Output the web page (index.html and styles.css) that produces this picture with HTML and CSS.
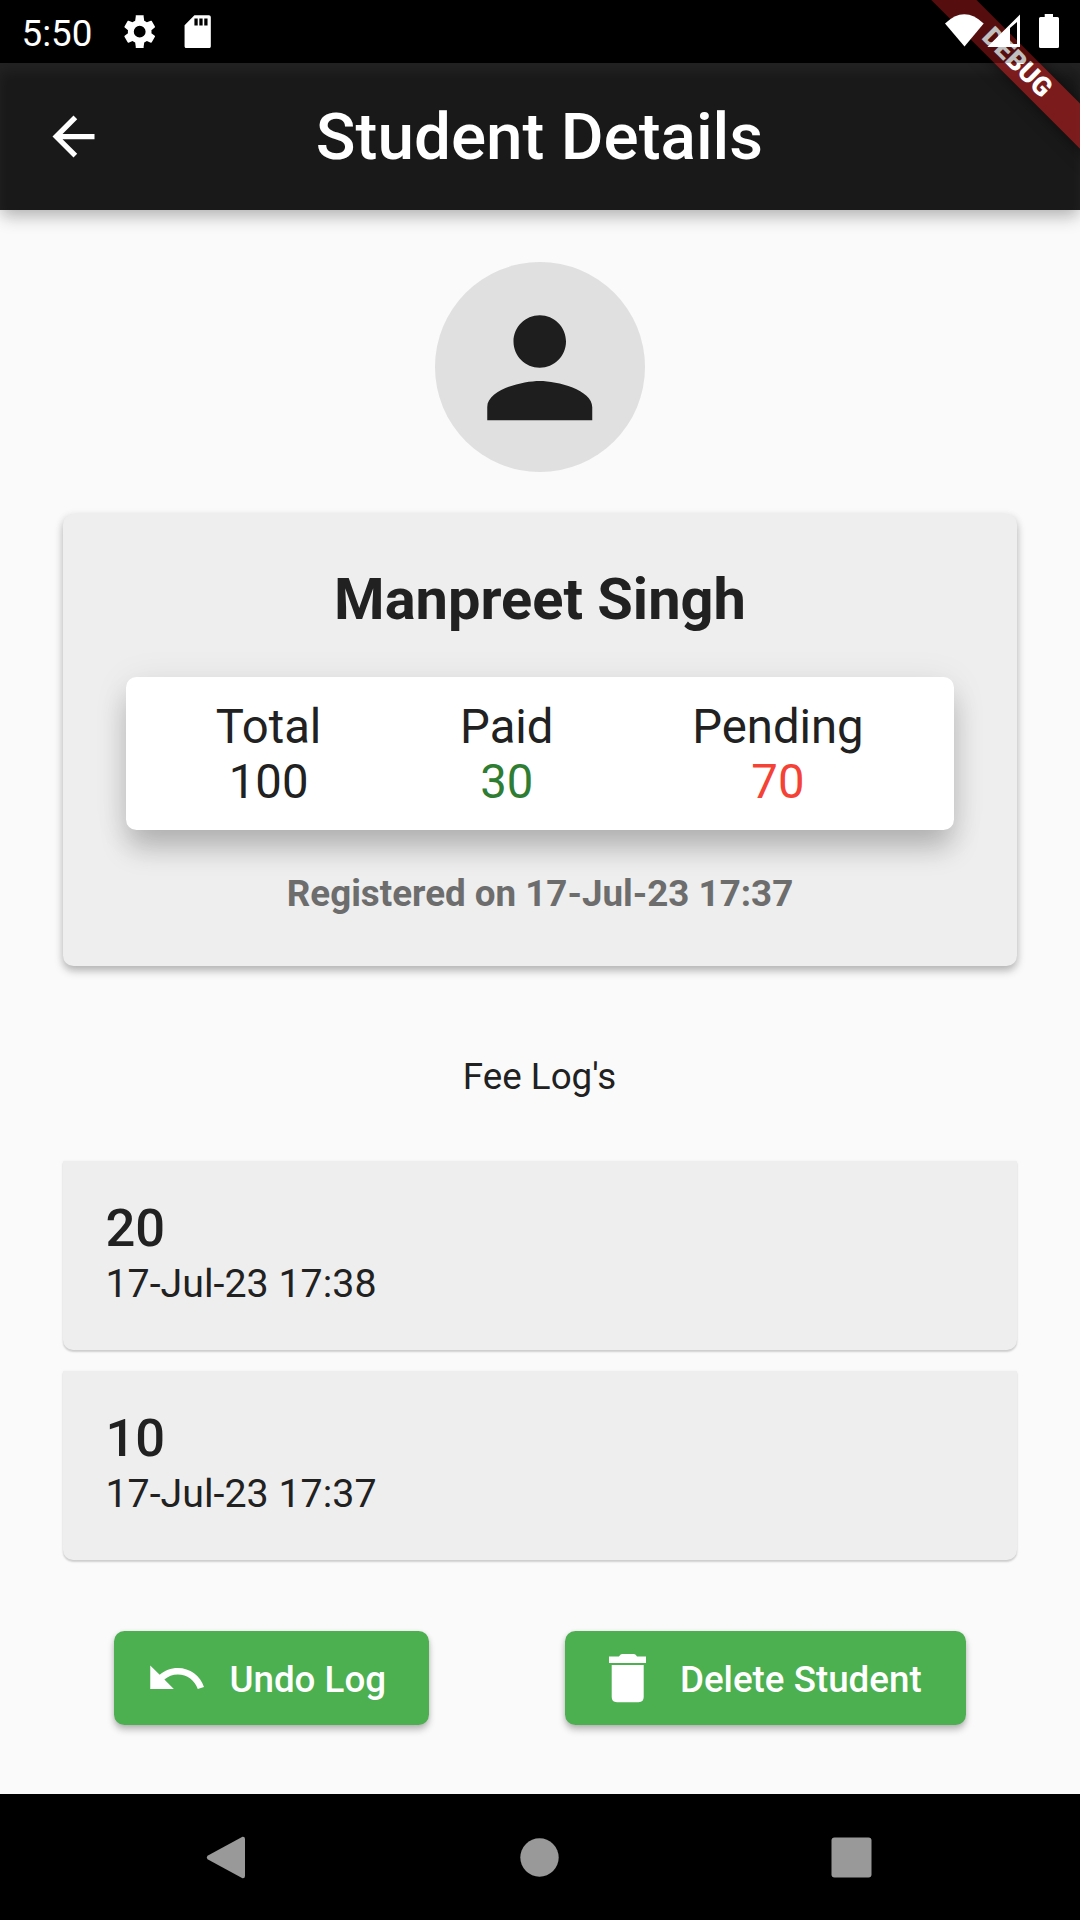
FILE: index.html
```html
<!DOCTYPE html>
<html lang="en">
<head>
<meta charset="utf-8">
<title>Student Details</title>
<link rel="stylesheet" href="styles.css">
</head>
<body>
<div class="screen">
  <header class="top">
    <div class="status">
      <span class="time">5:50</span>
      <svg class="settings" viewBox="0 0 24 24"><path d="M19.14 12.94c.04-.3.06-.61.06-.94 0-.32-.02-.64-.07-.94l2.03-1.58c.18-.14.23-.41.12-.61l-1.92-3.32c-.12-.22-.37-.29-.59-.22l-2.39.96c-.5-.38-1.03-.7-1.62-.94L14.4 2.81V2H9.6v.81l-.36 2.54c-.59.24-1.13.57-1.62.94l-2.39-.96c-.22-.08-.47 0-.59.22L2.74 8.87c-.12.21-.08.47.12.61l2.03 1.58c-.05.3-.09.63-.09.94s.02.64.07.94l-2.03 1.58c-.18.14-.23.41-.12.61l1.92 3.32c.12.22.37.29.59.22l2.39-.96c.5.38 1.03.7 1.62.94L9.6 21.2v.8h4.8v-.8l.36-2.55c.59-.24 1.13-.56 1.62-.94l2.39.96c.22.08.47 0 .59-.22l1.92-3.32c.12-.22.07-.47-.12-.61l-2.02-1.58zM12 15.6a3.6 3.6 0 1 1 0-7.2 3.6 3.6 0 0 1 0 7.2z"/></svg>
      <svg class="sdcard" viewBox="0 0 24 24"><path d="M18.8 2H10L4 8v12.8c0 .7.5 1.2 1.2 1.2h13.600c.7 0 1.200-.5 1.200-1.200V3.200c0-.7-.5-1.200-1.200-1.200zM12 8.300h-2V4h2zm3 0h-2V4h2zm3 0h-2V4h2z"/></svg>
    </div>
    <div class="appbar">
      <svg class="back" viewBox="0 0 24 24"><path d="M20 11H7.830l5.590-5.590L12 4l-8 8 8 8 1.410-1.410L7.830 13H20v-2z"/></svg>
      <h1>Student Details</h1>
    </div>
    <div class="corner">
      <div class="banner">DEBUG</div>
      <div class="scrim"></div>
      <svg class="indicators" viewBox="0 0 135 63">
        <path d="M0 23.500Q19.300 5 38.700 23.500L19.500 46.500z"/>
        <path fill-rule="evenodd" d="M42.300 47L75 14.500V47zM65 28v16h7V22z"/>
        <path d="M99.700 17V14h8.300v3h4.500q1.500 0 1.500 1.500v28q0 1.500-1.500 1.500H95.500Q94 48 94 46.500v-28q0-1.500 1.500-1.500z"/>
      </svg>
    </div>
  </header>

  <main>
    <div class="avatar"><svg viewBox="0 0 24 24"><path d="M12 12c2.210 0 4-1.790 4-4s-1.790-4-4-4-4 1.790-4 4 1.790 4 4 4zm0 2c-2.670 0-8 1.340-8 4v2h16v-2c0-2.660-5.330-4-8-4z"/></svg></div>

    <section class="student">
      <h2>Manpreet Singh</h2>
      <div class="fees">
        <div>Total<span>100</span></div>
        <div>Paid<span class="paid">30</span></div>
        <div>Pending<span class="pending">70</span></div>
      </div>
      <p class="registered">Registered on 17-Jul-23 17:37</p>
    </section>

    <h3>Fee Log's</h3>

    <ul class="logs">
      <li><strong>20</strong><span>17-Jul-23 17:38</span></li>
      <li><strong>10</strong><span>17-Jul-23 17:37</span></li>
    </ul>

    <div class="actions">
      <button class="undo"><svg viewBox="0 0 24 24"><path d="M12.500 8c-2.650 0-5.050.99-6.900 2.600L2 7v9h9l-3.620-3.620c1.390-1.160 3.160-1.880 5.120-1.880 3.540 0 6.550 2.310 7.600 5.500l2.370-.78C21.080 11.030 17.150 8 12.500 8z"/></svg><span>Undo Log</span></button>
      <button class="delete"><svg viewBox="0 0 63 63"><path d="M23 9.500Q24 7 26 7h12q2 0 3 2.500h9V16H13V9.500zM15.700 18h32v32q0 5.200-5.200 5.200H20.900q-5.200 0-5.200-5.200z"/></svg><span>Delete Student</span></button>
    </div>
  </main>

  <nav>
    <svg viewBox="0 0 63 63"><path d="M15.500 29.700L50.500 10.800Q53 10.500 53 13v37Q53 52.500 50.500 52.200L15.500 33.300Q14 31.500 15.500 29.700z"/></svg>
    <svg viewBox="0 0 63 63"><circle cx="31.500" cy="31.500" r="19.200"/></svg>
    <svg viewBox="0 0 63 63"><rect x="11.500" y="11.500" width="40" height="40" rx="3"/></svg>
  </nav>
</div>
</body>
</html>
```
FILE: styles.css
```css
* { box-sizing: border-box; margin: 0; padding: 0; }
body { font-family: Roboto, sans-serif; color: #212121; background: #fafafa; }
svg { fill: #fff; flex: none; display: block; }
.screen { width: 1080px; height: 1920px; display: flex; flex-direction: column; overflow: hidden; }

.top { position: relative; height: 210px; box-shadow: 0 9px 16px -2px rgba(0,0,0,.24), 0 2px 14px rgba(0,0,0,.07); }
.status { height: 63px; background: #000; display: flex; align-items: center; padding-left: 21px; color: #fff; }
.time { font-size: 36.75px; line-height: 43px; width: 99px; padding: 3px 0 0 .5px; }
.settings, .sdcard { width: 39.400px; height: 39.400px; }
.sdcard { margin-left: 19px; }
.appbar { height: 147px; background: #191919; box-shadow: inset 0 9px 14px rgba(255,255,255,.045); display: grid; grid-template-columns: 147px 1fr 148px; align-items: center; }
.back { width: 63px; height: 63px; margin-left: 42px; }
h1 { color: #fff; font-size: 65.625px; line-height: 77px; font-weight: 500; text-align: center; }

.corner { position: absolute; top: 0; right: 0; width: 240px; height: 210px; overflow: hidden; }
.banner { position: absolute; left: 52px; top: 47px; width: 250px; height: 31.500px; line-height: 31.500px; transform: rotate(45deg); background: rgba(183,28,28,.627); box-shadow: 0 0 16px rgba(0,0,0,.5); color: #fff; font-size: 26.800px; font-weight: 900; text-align: center; }
.scrim { position: absolute; left: 0; top: 0; width: 240px; height: 63px; background: rgba(0,0,0,.25); }
.indicators { position: absolute; left: 105px; top: 0; width: 135px; height: 63px; }

main { flex: 1; padding: 52.300px 63px 0; display: flex; flex-direction: column; }
.avatar { width: 210px; height: 210px; border-radius: 50%; background: #e0e0e0; align-self: center; display: grid; place-items: center; }
.avatar svg { width: 157.500px; height: 157.500px; fill: #1e1e1e; }

.student { margin-top: 42.200px; height: 451.500px; padding: 51px 63px 0; background: #eee; border-radius: 10.500px; text-align: center; box-shadow: 0 5px 8px rgba(0,0,0,.25), 0 1px 8px rgba(0,0,0,.07); }
h2 { font-size: 57.750px; line-height: 68px; font-weight: 700; }
.fees { margin-top: 43.500px; height: 153px; padding: 23px 21px 19px 20.500px; display: flex; justify-content: space-around; background: #fff; border-radius: 10.500px; font-size: 47.250px; line-height: 55.400px; box-shadow: 0 20px 28px -2px rgba(0,0,0,.22), 0 4px 36px rgba(0,0,0,.08); }
.fees span { display: block; }
.fees .paid { color: #2e7d32; }
.fees .pending { color: #f44336; }
.registered { margin-top: 42px; font-size: 36.750px; line-height: 43px; font-weight: 700; color: #6d6d6d; }

h3 { margin-top: 89px; padding-right: 1px; font-size: 36.750px; line-height: 43px; font-weight: 400; text-align: center; }

.logs { list-style: none; margin-top: 63px; display: flex; flex-direction: column; gap: 21px; }
.logs li { height: 189px; padding: 36px 42.500px 0; background: #eee; border-radius: 1px 1px 10px 10px; box-shadow: 0 2px 2px rgba(0,0,0,.17), 0 0 3px rgba(0,0,0,.05); }
.logs strong { display: block; font-size: 52.500px; line-height: 62px; font-weight: 500; }
.logs span { display: block; margin-top: 2px; font-size: 39.375px; line-height: 46px; }

.actions { margin-top: 71px; padding: 0 51px; display: flex; justify-content: space-between; }
button { height: 94.500px; border: 0; border-radius: 10.500px; background: #4caf50; color: #fff; font: 500 36.750px/43px Roboto, sans-serif; display: flex; align-items: center; gap: 21.400px; padding-left: 31px; box-shadow: 0 5px 7px rgba(0,0,0,.23), 0 1px 5px rgba(0,0,0,.1); }
button svg { width: 63px; height: 63px; }
button span { padding-top: 2px; }
.undo { width: 315px; }
.delete { width: 401.500px; }

nav { height: 126px; background: #000; display: flex; justify-content: space-between; align-items: center; padding: 0 197.500px 0 191.500px; }
nav svg { width: 63px; height: 63px; fill: #999; }
nav svg:nth-child(2) { margin-left: 5px; }
```
